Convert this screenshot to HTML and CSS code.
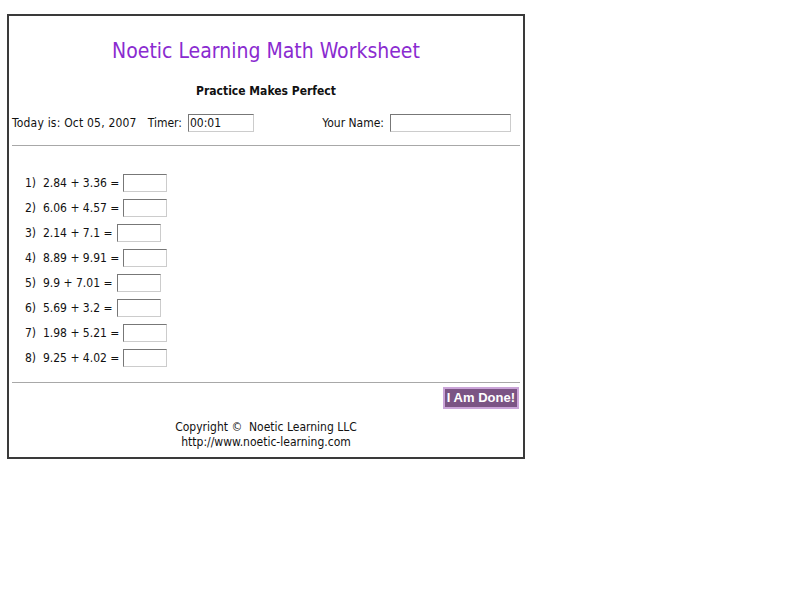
FILE: index.html
```html
<!DOCTYPE html>
<html>
<head>
<meta charset="utf-8">
<link rel="stylesheet" href="styles.css">
</head>
<body>
<div class="sheet">
  <h1 class="title">Noetic Learning Math Worksheet</h1>
  <div class="subtitle">Practice Makes Perfect</div>
  <div class="info">
    <div class="info-left">
      <span class="today">Today is: Oct 05, 2007</span>
      <span class="timer-label">Timer:</span>
      <input class="timer" type="text" value="00:01">
    </div>
    <div class="info-right">
      <span>Your Name:</span>
      <input class="name" type="text">
    </div>
  </div>
  <hr class="rule">
  <ol class="problems">
    <li><span>1)&nbsp; 2.84 + 3.36 =</span><input class="ans" type="text"></li>
    <li><span>2)&nbsp; 6.06 + 4.57 =</span><input class="ans" type="text"></li>
    <li><span>3)&nbsp; 2.14 + 7.1 =</span><input class="ans" type="text"></li>
    <li><span>4)&nbsp; 8.89 + 9.91 =</span><input class="ans" type="text"></li>
    <li><span>5)&nbsp; 9.9 + 7.01 =</span><input class="ans" type="text"></li>
    <li><span>6)&nbsp; 5.69 + 3.2 =</span><input class="ans" type="text"></li>
    <li><span>7)&nbsp; 1.98 + 5.21 =</span><input class="ans" type="text"></li>
    <li><span>8)&nbsp; 9.25 + 4.02 =</span><input class="ans" type="text"></li>
  </ol>
  <hr class="rule rule2">
  <div class="actions"><button class="done">I Am Done!</button></div>
  <div class="footer">
    <div>Copyright &copy;&nbsp; Noetic Learning LLC</div>
    <div>http://www.noetic-learning.com</div>
  </div>
</div>
</body>
</html>
```
FILE: styles.css
```css
html, body {
  margin: 0;
  padding: 0;
  background: #fff;
}
body {
  font-family: "DejaVu Sans Condensed", "DejaVu Sans", sans-serif;
  font-size: 12px;
  color: #111;
}
.sheet {
  margin: 14px 0 0 7px;
  width: 514px;
  height: 441px;
  border: 2px solid #3a3a3a;
  padding: 0;
}
.title {
  margin: 22px 0 0;
  text-align: center;
  font-size: 21px;
  font-weight: normal;
  color: #8a2bd0;
  line-height: 26px;
}
.subtitle {
  margin-top: 19px;
  text-align: center;
  font-weight: bold;
  font-size: 12px;
  line-height: 16px;
}
.info {
  display: flex;
  align-items: center;
  margin-top: 14px;
  padding: 0 12px 0 3px;
  height: 20px;
}
.info-left {
  display: flex;
  align-items: center;
}
.today {
  letter-spacing: 0.2px;
}
.timer-label {
  margin-left: 11px;
}
.info-right {
  display: flex;
  align-items: center;
  margin-left: auto;
}
input {
  box-sizing: border-box;
  height: 18px;
  border: 1px solid #ccc;
  border-top-color: #777;
  border-left-color: #777;
  font-family: inherit;
  font-size: 12px;
  padding: 0 1px;
  margin: 0 0 0 5px;
  background: #fff;
  color: #111;
}
.timer { width: 66px; margin-left: 6px; }
.name { width: 121px; margin-left: 6px; }
.rule {
  margin: 12px 3px 0;
  border: 0;
  border-top: 1px solid #a8a8a8;
  height: 0;
}
.problems {
  list-style: none;
  margin: 0;
  padding: 28px 0 0 16px;
  display: flex;
  flex-direction: column;
  gap: 7px;
}
.problems li {
  display: flex;
  align-items: center;
  height: 18px;
}
.ans { width: 44px; margin-left: 4px; }
.rule2 { margin-top: 15px; }
.actions {
  display: flex;
  justify-content: flex-end;
  padding: 4px 4px 0 0;
}
.done {
  background: #7b5484;
  color: #fff;
  border: 2px solid #caa4d8;
  font-family: "Liberation Sans", Arial, sans-serif;
  font-weight: bold;
  font-size: 13px;
  padding: 1px 2px;
  line-height: 16px;
}
.footer {
  margin-top: 11px;
  text-align: center;
  line-height: 15px;
  font-size: 12px;
}
```
